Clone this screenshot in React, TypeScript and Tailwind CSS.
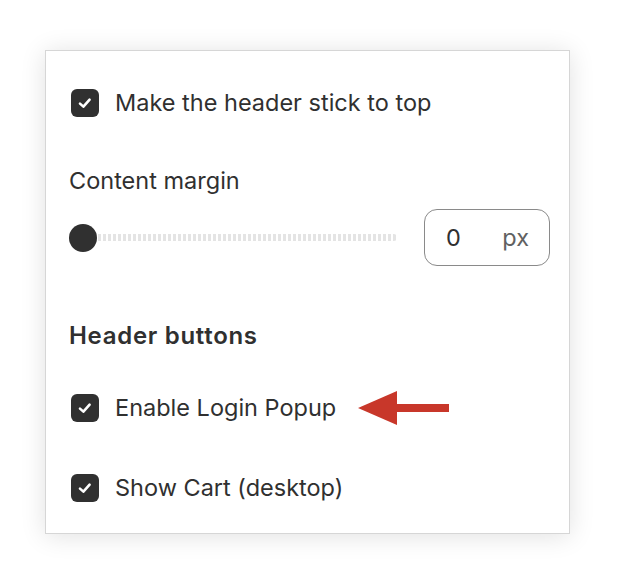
import React from "react";

function Check() {
  return (
    <div className="w-[28px] h-[28px] rounded-[6px] bg-[#303030] flex items-center justify-center shrink-0">
      <svg width="18" height="18" viewBox="0 0 18 18" fill="none">
        <path d="M4 9.6 L7.4 12.6 L13.6 5.6" stroke="white" strokeWidth="2.6" strokeLinecap="round" strokeLinejoin="round" />
      </svg>
    </div>
  );
}

export default function App() {
  return (
    <div className="w-[622px] h-[584px] bg-white relative" style={{ fontFamily: "Inter, 'Liberation Sans', sans-serif" }}>
      <div className="absolute left-[45px] top-[50px] w-[525px] h-[484px] bg-white border border-[#d6d6d6] shadow-[0_2px_24px_rgba(0,0,0,0.12)] text-[#303030]">
        <div className="flex flex-col pl-[23px] pr-[19px]">
          <div className="flex items-center gap-[16px] mt-[38px] pl-[2px] h-[28px]">
            <Check />
            <span className="text-[23.5px] leading-none">Make the header stick to top</span>
          </div>
          <div className="mt-[52px] text-[23.5px] leading-none h-[24px] flex items-center">Content margin</div>
          <div className="mt-[16px] flex items-center justify-between">
            <div className="relative flex items-center w-[328px] h-[28px]">
              <div className="absolute left-[24px] right-0 h-[7px] rounded-full bg-[repeating-linear-gradient(90deg,#e4e4e4_0_3px,transparent_3px_5px)]" />
              <div className="relative w-[28px] h-[28px] rounded-full bg-[#303030]" />
            </div>
            <div className="w-[126px] h-[57px] rounded-[13px] border border-[#8a8a8a] flex items-center pl-[21px] pr-[20px] justify-between">
              <span className="text-[23.5px] leading-none">0</span>
              <span className="text-[23.5px] leading-none text-[#616161]">px</span>
            </div>
          </div>
          <div className="mt-[58px] text-[24px] leading-none font-semibold tracking-[0.7px] h-[24px] flex items-center">Header buttons</div>
          <div className="mt-[46px] flex items-center gap-[16px] pl-[2px] h-[28px]">
            <Check />
            <span className="text-[23.5px] leading-none">Enable Login Popup</span>
          </div>
          <div className="mt-[52px] flex items-center gap-[16px] pl-[2px] h-[28px]">
            <Check />
            <span className="text-[23.5px] leading-none">Show Cart (desktop)</span>
          </div>
        </div>
        <svg className="absolute left-[312px] top-[340px]" width="92" height="34" viewBox="0 0 92 34">
          <polygon points="0,17 39,0 39,34" fill="#c8372a" />
          <rect x="38" y="13" width="53" height="8" fill="#c8372a" />
        </svg>
      </div>
    </div>
  );
}
